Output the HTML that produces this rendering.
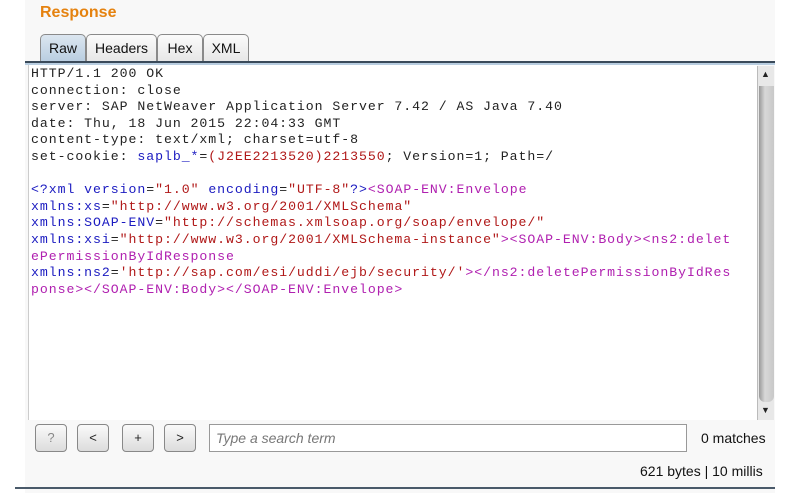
<!DOCTYPE html>
<html><head><meta charset="utf-8"><style>
*{margin:0;padding:0;box-sizing:border-box}
body{width:806px;height:493px;background:#fff;position:relative;overflow:hidden;font-family:"Liberation Sans",Arial,sans-serif}
.panel{position:absolute;left:25px;top:0;width:750px;height:493px;background:#f8f8f8}
.title{position:absolute;left:40px;top:4px;font-size:16px;font-weight:bold;color:#e5820f}
.tab{position:absolute;top:34px;height:28px;border:1px solid #8a8a8a;border-bottom:none;border-radius:5px 5px 0 0;background:linear-gradient(#fbfbfb,#e6e6e6);font-size:14px;color:#111;text-align:center;line-height:26px}
.tab.sel{background:linear-gradient(#dce6f0,#b8cde0)}
.line1{position:absolute;left:25px;top:61px;width:750px;height:2px;background:#3a4a5a}
.line2{position:absolute;left:25px;top:63px;width:750px;height:2px;background:#b8cde0}
.text{position:absolute;left:28px;top:65px;width:729px;height:355px;background:#fff;border-left:1px solid #ccc}
pre{position:absolute;left:31px;top:66px;font-family:"Liberation Mono","Courier New",monospace;font-size:13.2px;letter-spacing:0.95px;line-height:16.6px;color:#222}
.b{color:#1a1ac0}.r{color:#b01818}.p{color:#b020b0}
.sb{position:absolute;left:757px;top:66px;width:17px;height:354px;background:#e8e8e8;border-left:1px solid #bbb}
.thumb{position:absolute;left:1px;top:20px;width:15px;height:316px;background:linear-gradient(90deg,#999,#d8d8d8 40%,#c8c8c8);border-radius:0 0 6px 6px}
.arr{position:absolute;left:3px;font-size:9px;color:#222}
.btn{position:absolute;top:424px;width:32px;height:28px;border:1px solid #888;border-radius:4px;background:linear-gradient(#fafafa,#dcdcdc);font-size:13px;text-align:center;line-height:26px;color:#222}
.search{position:absolute;left:209px;top:424px;width:478px;height:28px;background:#fff;border:1px solid #999;font-size:14px;font-style:italic;color:#777;padding-left:6px;line-height:26px}
.small{position:absolute;font-size:14px;color:#111}
.bot{position:absolute;left:15px;top:487px;width:760px;height:2px;background:#4a5a6a}
</style></head><body>
<div class="panel"></div>
<div class="title">Response</div>
<div class="tab sel" style="left:40px;width:46px">Raw</div>
<div class="tab" style="left:86px;width:71px">Headers</div>
<div class="tab" style="left:157px;width:46px">Hex</div>
<div class="tab" style="left:203px;width:46px">XML</div>
<div class="line1"></div><div class="line2"></div>
<div class="text"></div>
<pre>HTTP/1.1 200 OK
connection: close
server: SAP NetWeaver Application Server 7.42 / AS Java 7.40
date: Thu, 18 Jun 2015 22:04:33 GMT
content-type: text/xml; charset=utf-8
set-cookie: <span class="b">saplb_*</span>=<span class="r">(J2EE2213520)2213550</span>; Version=1; Path=/

<span class="b">&lt;?xml version</span>=<span class="r">"1.0"</span> <span class="b">encoding</span>=<span class="r">"UTF-8"</span><span class="b">?&gt;</span><span class="p">&lt;SOAP-ENV:Envelope</span>
<span class="b">xmlns:xs</span>=<span class="r">"http://www.w3.org/2001/XMLSchema"</span>
<span class="b">xmlns:SOAP-ENV</span>=<span class="r">"http://schemas.xmlsoap.org/soap/envelope/"</span>
<span class="b">xmlns:xsi</span>=<span class="r">"http://www.w3.org/2001/XMLSchema-instance"</span><span class="p">&gt;&lt;SOAP-ENV:Body&gt;&lt;ns2:delet</span>
<span class="p">ePermissionByIdResponse</span>
<span class="b">xmlns:ns2</span>=<span class="r">'http://sap.com/esi/uddi/ejb/security/'</span><span class="p">&gt;&lt;/ns2:deletePermissionByIdRes</span>
<span class="p">ponse&gt;&lt;/SOAP-ENV:Body&gt;&lt;/SOAP-ENV:Envelope&gt;</span></pre>
<div class="sb"><div class="arr" style="top:3px">▲</div><div class="thumb"></div><div class="arr" style="top:339px">▼</div></div>
<div class="btn" style="left:35px;color:#888">?</div>
<div class="btn" style="left:77px">&lt;</div>
<div class="btn" style="left:122px">+</div>
<div class="btn" style="left:164px">&gt;</div>
<div class="search">Type a search term</div>
<div class="small" style="left:701px;top:430px">0 matches</div>
<div class="small" style="left:640px;top:463px">621 bytes | 10 millis</div>
<div class="bot"></div>
</body></html>
